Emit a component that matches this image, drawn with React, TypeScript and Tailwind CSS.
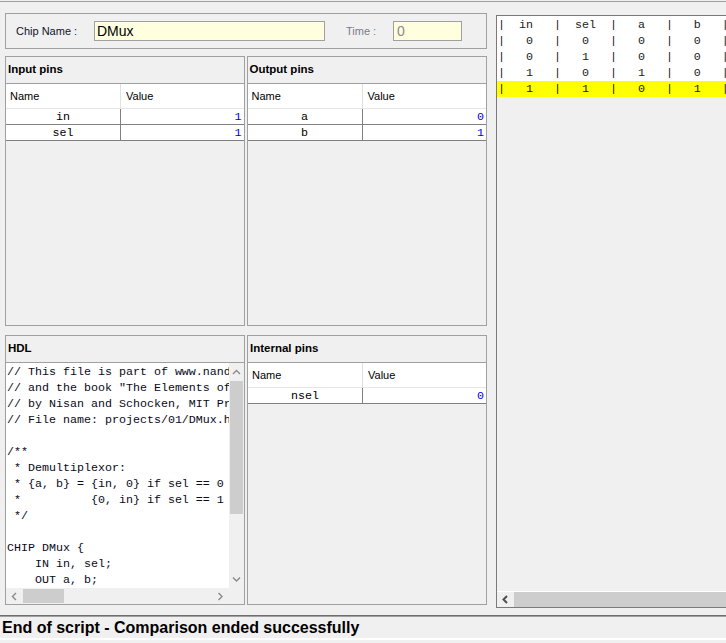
import React from "react";

const SANS = { fontFamily: '"Liberation Sans", Arial, sans-serif' };
const MONO = { fontFamily: '"Liberation Mono", "Courier New", monospace' };

const HDL_LINES = [
  "// This file is part of www.nand2tetris.org",
  '// and the book "The Elements of Computing Systems"',
  "// by Nisan and Schocken, MIT Press.",
  "// File name: projects/01/DMux.hdl",
  "",
  "/**",
  " * Demultiplexor:",
  " * {a, b} = {in, 0} if sel == 0",
  " *          {0, in} if sel == 1",
  " */",
  "",
  "CHIP DMux {",
  "    IN in, sel;",
  "    OUT a, b;",
  "",
  "    PARTS:",
];

const COMPARE = [
  "|  in   |  sel  |   a   |   b   |",
  "|   0   |   0   |   0   |   0   |",
  "|   0   |   1   |   0   |   0   |",
  "|   1   |   0   |   1   |   0   |",
  "|   1   |   1   |   0   |   1   |",
];

function Chev({ dir, dark }: { dir: "up" | "down" | "left" | "right"; dark?: boolean }) {
  const paths = {
    up: "M1 5 L4.5 1.5 L8 5",
    down: "M1 1.5 L4.5 5 L8 1.5",
    left: "M5 1 L1.5 4.5 L5 8",
    right: "M1.5 1 L5 4.5 L1.5 8",
  };
  const vert = dir === "up" || dir === "down";
  return (
    <svg width={vert ? 9 : 7} height={vert ? 7 : 9} viewBox={vert ? "0 0 9 7" : "0 0 7 9"}>
      <path d={paths[dir]} fill="none" stroke={dark ? "#505050" : "#8a8a8a"} strokeWidth={dark ? 2 : 1.4} />
    </svg>
  );
}

function Panel({ title, className, children }: { title: string; className?: string; children: React.ReactNode }) {
  return (
    <div className={`flex flex-col border border-[#a0a0a0] ${className ?? ""}`}>
      <div className="h-[26px] shrink-0 flex items-center px-[2px] text-[11.5px] font-bold text-black" style={SANS}>
        {title}
      </div>
      {children}
    </div>
  );
}

function PinTable({ rows }: { rows: { name: string; value: string }[] }) {
  return (
    <div className="border-t border-[#a0a0a0]">
      <div className="h-[25px] flex bg-white border-b border-[#e6e6e6] text-[11px] text-black" style={SANS}>
        <div className="w-[115px] border-r border-[#e0e0e0] flex items-center pl-[4px]">Name</div>
        <div className="flex-1 flex items-center pl-[5px]">Value</div>
      </div>
      {rows.map((r) => (
        <div key={r.name} className="h-[16px] flex bg-white border-b border-[#808080] text-[11.67px] leading-[16px]" style={MONO}>
          <div className="w-[115px] border-r border-[#808080] text-center text-black">{r.name}</div>
          <div className="flex-1 text-right pr-[2px] text-[#0000ee]">{r.value}</div>
        </div>
      ))}
    </div>
  );
}

export default function App() {
  return (
    <div className="w-[726px] h-[643px] bg-[#f0f0f0] overflow-hidden flex flex-col" style={SANS}>
      <div className="h-px mt-px bg-[#a0a0a0] shrink-0" />

      <div className="flex items-start pt-[11px] shrink-0">
        {/* left column */}
        <div className="ml-[5px] w-[482px] flex flex-col">
          <div className="h-[36px] border border-[#a0a0a0] flex items-center pl-[10px]">
            <div className="w-[78px] text-[11px] text-[#10102a]">Chip Name :</div>
            <div className="w-[231px] h-[20px] border border-[#a0a0a0] bg-[#ffffe0] flex items-center pl-[2px] text-[14px] text-black">
              DMux
            </div>
            <div className="ml-[21px] w-[47px] text-[11px] text-[#7a7a8a]">Time :</div>
            <div className="w-[69px] h-[20px] border border-[#a0a0a0] bg-[#ffffe0] flex items-center pl-[3px] text-[14px] text-[#8a8a8a]">
              0
            </div>
          </div>

          <div className="mt-[7px] h-[270px] flex gap-[2px]">
            <Panel title="Input pins" className="w-[240px]">
              <PinTable rows={[{ name: "in", value: "1" }, { name: "sel", value: "1" }]} />
            </Panel>
            <Panel title="Output pins" className="w-[241px]">
              <PinTable rows={[{ name: "a", value: "0" }, { name: "b", value: "1" }]} />
            </Panel>
          </div>

          <div className="mt-[9px] h-[270px] flex gap-[2px]">
            <Panel title="HDL" className="w-[240px]">
              <div className="border-t border-[#a0a0a0] flex-1 flex flex-col min-h-0">
                <div className="flex-1 flex min-h-0">
                  <div className="flex-1 bg-white overflow-hidden pt-[1px] pl-[1px]">
                    <pre className="text-[11.67px] leading-[16px] text-[#0a0a20] whitespace-pre" style={MONO}>
                      {HDL_LINES.join("\n")}
                    </pre>
                  </div>
                  <div className="w-[15px] flex flex-col bg-[#f0f0f0]">
                    <div className="h-[18px] flex items-center justify-center">
                      <Chev dir="up" />
                    </div>
                    <div className="h-[133px] mx-[1px] bg-[#cdcdcd]" />
                    <div className="flex-1" />
                    <div className="h-[17px] flex items-center justify-center">
                      <Chev dir="down" />
                    </div>
                  </div>
                </div>
                <div className="h-[16px] flex bg-[#f0f0f0] shrink-0">
                  <div className="w-[17px] flex items-center justify-center">
                    <Chev dir="left" />
                  </div>
                  <div className="w-[41px] my-[1px] bg-[#cdcdcd]" />
                  <div className="flex-1" />
                  <div className="w-[17px] flex items-center justify-center">
                    <Chev dir="right" />
                  </div>
                  <div className="w-[15px]" />
                </div>
              </div>
            </Panel>
            <Panel title="Internal pins" className="w-[241px]">
              <PinTable rows={[{ name: "nsel", value: "0" }]} />
            </Panel>
          </div>
        </div>

        {/* comparison panel */}
        <div className="ml-[9px] mt-[2px] w-[240px] h-[593px] shrink-0 border border-[#7a7a7a] flex flex-col">
          <div className="bg-white pt-px">
            {COMPARE.map((line, i) => (
              <div key={i} className={`h-[16px] pl-[1px] ${i === COMPARE.length - 1 ? "bg-[#ffff00]" : ""}`}>
                <pre className="text-[11.67px] leading-[16px] text-[#1a1a1a] whitespace-pre" style={MONO}>
                  {line}
                </pre>
              </div>
            ))}
          </div>
          <div className="flex-1" />
          <div className="h-[16px] flex border-t border-white shrink-0">
            <div className="w-[17px] flex items-center justify-center">
              <Chev dir="left" dark />
            </div>
            <div className="flex-1 bg-[#cdcdcd]" />
          </div>
        </div>
      </div>

      {/* status bar */}
      <div className="mt-[7px] h-px bg-[#6e6e6e] shrink-0" />
      <div className="h-px bg-[#a0a0a0] shrink-0" />
      <div className="h-[21px] flex items-center pl-[2px] text-[16px] font-bold text-black shrink-0">
        End of script - Comparison ended successfully
      </div>
      <div className="h-[2px] bg-white shrink-0" />
    </div>
  );
}
